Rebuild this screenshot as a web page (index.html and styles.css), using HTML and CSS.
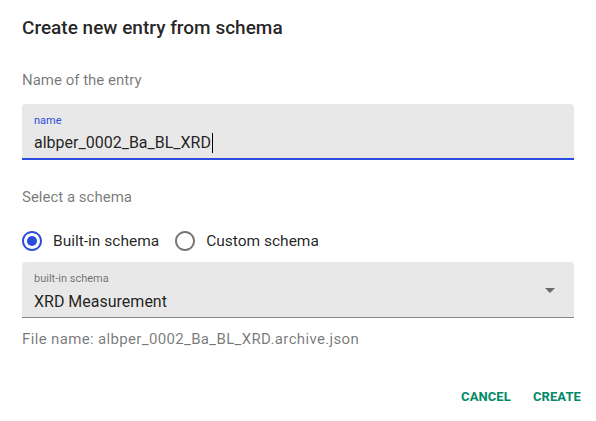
FILE: index.html
```html
<!DOCTYPE html>
<html>
<head>
<meta charset="utf-8">
<link rel="stylesheet" href="styles.css">
</head>
<body>
<div class="dialog">
  <h2 class="title">Create new entry from schema</h2>
  <div class="content">
    <div class="section-label">Name of the entry</div>
    <div class="field focused">
      <div class="field-label">name</div>
      <div class="field-value">albper_0002_Ba_BL_XRD<span class="caret"></span></div>
    </div>
    <div class="section-label second">Select a schema</div>
    <div class="radios">
      <label class="radio">
        <svg class="radio-icon checked" viewBox="0 0 24 24" width="24" height="24"><path d="M12 2C6.48 2 2 6.48 2 12s4.48 10 10 10 10-4.48 10-10S17.52 2 12 2zm0 18c-4.42 0-8-3.58-8-8s3.58-8 8-8 8 3.58 8 8-3.58 8-8 8z"/><circle cx="12" cy="12" r="5"/></svg>
        <span>Built-in schema</span>
      </label>
      <label class="radio">
        <svg class="radio-icon" viewBox="0 0 24 24" width="24" height="24"><path d="M12 2C6.48 2 2 6.48 2 12s4.48 10 10 10 10-4.48 10-10S17.52 2 12 2zm0 18c-4.42 0-8-3.58-8-8s3.58-8 8-8 8 3.58 8 8-3.58 8-8 8z"/></svg>
        <span>Custom schema</span>
      </label>
    </div>
    <div class="field select">
      <div class="field-label">built-in schema</div>
      <div class="field-value">XRD Measurement</div>
      <svg class="arrow" viewBox="0 0 24 24" width="24" height="24"><path d="M7 10l5 5 5-5z"/></svg>
    </div>
    <div class="helper">File name: albper_0002_Ba_BL_XRD.archive.json</div>
  </div>
  <div class="actions">
    <button class="btn">Cancel</button>
    <button class="btn">Create</button>
  </div>
</div>
</body>
</html>
```
FILE: styles.css
```css
html, body {
  margin: 0;
  background: #fff;
}
body {
  font-family: Roboto, "Noto Sans", sans-serif;
  color: rgba(0,0,0,0.87);
}
.dialog {
  width: 596px;
  height: 421px;
  box-sizing: border-box;
  padding: 16px 22px 0 22px;
}
.title {
  margin: 0;
  font-size: 19px;
  font-weight: 500;
  line-height: 24px;
  letter-spacing: 0;
}
.content {
  padding-top: 30px;
}
.section-label {
  font-size: 15px;
  line-height: 20px;
  color: rgba(0,0,0,0.54);
}
.section-label.second {
  margin-top: 27px;
}
.field {
  position: relative;
  margin-top: 14px;
  height: 56px;
  box-sizing: border-box;
  background: #e8e8e8;
  border-radius: 4px 4px 0 0;
  border-bottom: 1px solid rgba(0,0,0,0.42);
  padding: 10px 12px 0 12px;
}
.field.focused {
  border-bottom: 2px solid #2a4cdf;
}
.field-label {
  font-size: 11px;
  line-height: 14px;
  color: rgba(0,0,0,0.54);
}
.focused .field-label {
  color: #2a4cdf;
}
.field-value {
  margin-top: 5px;
  font-size: 16px;
  line-height: 20px;
  color: rgba(0,0,0,0.87);
  display: flex;
  align-items: center;
}
.caret {
  display: inline-block;
  width: 1px;
  height: 20px;
  background: #000;
  margin-left: 1px;
}
.radios {
  display: flex;
  gap: 14px;
  margin-top: 13px;
  height: 42px;
  align-items: center;
  margin-left: -2px;
}
.radio {
  display: flex;
  align-items: center;
  gap: 9px;
  font-size: 15.5px;
}
.radio-icon {
  fill: rgba(0,0,0,0.54);
}
.radio-icon.checked {
  fill: #2a4cdf;
}
.select {
  margin-top: 0;
}
.select .field-value {
  margin-top: 6px;
}
.arrow {
  position: absolute;
  right: 12px;
  top: 16px;
  fill: rgba(0,0,0,0.54);
}
.helper {
  margin-top: 12px;
  font-size: 15px;
  line-height: 18px;
  letter-spacing: 0.35px;
  color: rgba(0,0,0,0.54);
}
.actions {
  display: flex;
  justify-content: flex-end;
  gap: 6px;
  margin-top: 33px;
  margin-right: -15px;
}
.btn {
  background: none;
  border: none;
  font-family: inherit;
  font-size: 13px;
  font-weight: 700;
  text-transform: uppercase;
  letter-spacing: 0.1px;
  color: #008a67;
  padding: 6px 8px;
  line-height: 20px;
}
```
